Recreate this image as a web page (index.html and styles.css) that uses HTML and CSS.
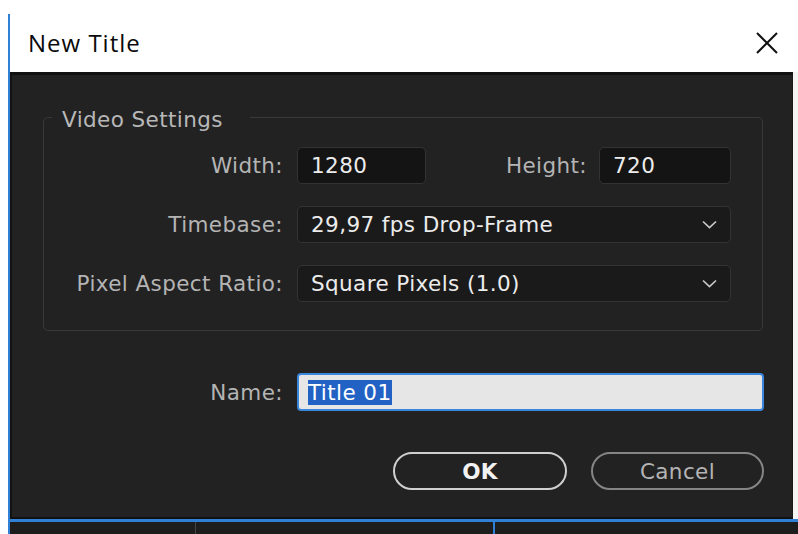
FILE: index.html
```html
<!DOCTYPE html>
<html>
<head>
<meta charset="utf-8">
<link rel="stylesheet" href="styles.css">
</head>
<body>
<div class="window">
  <div class="titlebar">
    <span class="title">New Title</span>
    <svg class="close" width="22" height="22" viewBox="0 0 22 22"><path d="M1 1 L21 21 M21 1 L1 21" stroke="#111" stroke-width="2" fill="none"/></svg>
  </div>
  <div class="row-wrap">
    <div class="dialog">
      <fieldset class="group">
        <legend class="legend">Video Settings</legend>
        <div class="grid">
          <label class="lbl">Width:</label>
          <div class="pair">
            <div class="field w1">1280</div>
            <label class="lbl grow">Height:</label>
            <div class="field w2">720</div>
          </div>
          <label class="lbl">Timebase:</label>
          <div class="field select"><span>29,97 fps Drop-Frame</span><svg class="chev" width="15" height="9" viewBox="0 0 15 9"><polyline points="1,1.5 7.5,7.5 14,1.5" stroke="#c8c8c8" stroke-width="1.7" fill="none"/></svg></div>
          <label class="lbl">Pixel Aspect Ratio:</label>
          <div class="field select"><span>Square Pixels (1.0)</span><svg class="chev" width="15" height="9" viewBox="0 0 15 9"><polyline points="1,1.5 7.5,7.5 14,1.5" stroke="#c8c8c8" stroke-width="1.7" fill="none"/></svg></div>
        </div>
      </fieldset>
      <div class="namerow">
        <label class="lbl">Name:</label>
        <div class="namefield"><span class="sel">Title 01</span></div>
      </div>
      <div class="buttons">
        <div class="btn ok">OK</div>
        <div class="btn cancel">Cancel</div>
      </div>
    </div>
    <div class="edge"></div>
  </div>
  <div class="strip">
    <div class="cell c1"></div>
    <div class="cell c2"></div>
    <div class="cell c3"></div>
  </div>
</div>
</body>
</html>
```
FILE: styles.css
```css
html, body {
  margin: 0;
  padding: 0;
  background: #ffffff;
  overflow: hidden;
}
.window {
  margin: 14px 0 0 8px;
  width: 790px;
  border-left: 2px solid #2f80d6;
  font-family: "DejaVu Sans", sans-serif;
  font-size: 21.5px;
  letter-spacing: 0.4px;
}
.titlebar {
  height: 58px;
  display: flex;
  align-items: center;
  justify-content: space-between;
  padding: 0 22px 0 18px;
  background: #fff;
}
.title {
  font-family: "Open Sans", sans-serif;
  font-size: 24px;
  font-weight: 500;
  letter-spacing: 1px;
  line-height: 58px;
  color: #0a0a0a;
}
.row-wrap {
  display: flex;
}
.dialog {
  width: 780px;
  background: #222223;
  border-top: 3px solid #111;
  border-left: 2px solid #121212;
  border-right: 1px solid #1a1a1a;
  border-bottom: 2px solid #111;
  padding: 0 0 27px 0;
  display: flex;
  flex-direction: column;
}
.edge {
  flex: 1;
  background: #f4f4f4;
}
.group {
  margin: 27px 0 0 31px;
  width: 720px;
  box-sizing: border-box;
  border: 1px solid #393939;
  border-radius: 5px;
  padding: 15px 31px 28px 0;
}
.legend {
  margin-left: 8px;
  padding: 6px 27px 0 10px;
  line-height: 24px;
  color: #b8b8b8;
}
.grid {
  display: grid;
  grid-template-columns: 239px 434px;
  grid-auto-rows: 37px;
  column-gap: 14px;
  row-gap: 22px;
}
.lbl {
  color: #b4b4b4;
  text-align: right;
  align-self: center;
  white-space: nowrap;
}
.pair {
  display: flex;
  align-items: center;
}
.grow {
  flex: 1;
  margin-right: 12px;
}
.field {
  box-sizing: border-box;
  height: 37px;
  background: #141414;
  border: 1px solid #333;
  border-radius: 5px;
  color: #ececec;
  padding: 0 13px;
  display: flex;
  align-items: center;
}
.w1 { width: 129px; }
.w2 { width: 132px; }
.select {
  justify-content: space-between;
  padding-right: 13px;
  background: #1a1a1a;
}
.chev { display: block; }
.namerow {
  margin: 42px 0 0 32px;
  width: 720px;
  display: grid;
  grid-template-columns: 239px 1fr;
  column-gap: 14px;
}
.namefield {
  box-sizing: border-box;
  height: 38px;
  background: #e6e6e6;
  border: 2px solid #3a86dc;
  border-radius: 4px;
  padding: 0 9px;
  display: flex;
  align-items: center;
}
.sel {
  background: #2262c4;
  color: #fff;
  line-height: 25px;
  padding-right: 1px;
}
.buttons {
  margin: 41px 0 0 0;
  width: 752px;
  display: flex;
  justify-content: flex-end;
  gap: 24px;
}
.btn {
  box-sizing: border-box;
  height: 38px;
  border-radius: 19px;
  display: flex;
  align-items: center;
  justify-content: center;
}
.ok {
  width: 174px;
  border: 2px solid #cfcfcf;
  color: #f2f2f2;
  font-weight: bold;
}
.cancel {
  width: 173px;
  border: 2px solid #858585;
  color: #b4b4b4;
}
.strip {
  display: flex;
  height: 12px;
  border-top: 3px solid #2f80d6;
  background: #1d1d1d;
}
.cell { height: 12px; }
.c1 { width: 185px; border-right: 1px solid #444; }
.c2 { width: 297px; border-right: 2px solid #2f80d6; }
.c3 { flex: 1; }
```
